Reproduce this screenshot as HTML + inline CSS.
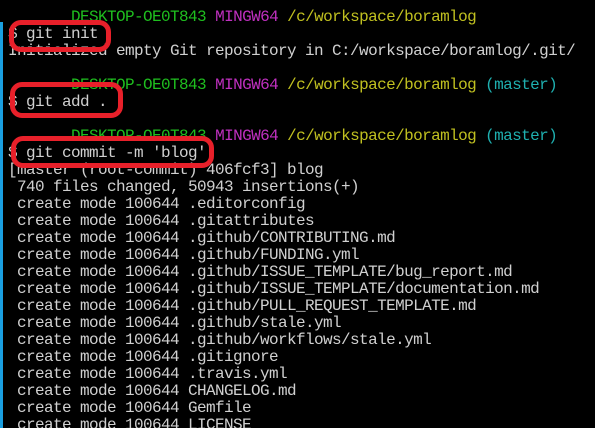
<!DOCTYPE html>
<html><head><meta charset="utf-8"><style>
html,body{margin:0;padding:0;background:#000;width:595px;height:428px;overflow:hidden;position:relative}
.t{position:absolute;left:8px;top:9px;font-family:"Liberation Mono",monospace;font-size:16px;letter-spacing:-0.6px;line-height:17px;color:#d0d0d0;white-space:pre}
.g{color:#1fbf1f}.m{color:#c030c0}.y{color:#c0c020}.c{color:#1fb0b0}
.b{position:absolute;border:5px solid #e8202a;border-radius:12px;box-sizing:border-box}
.strip{position:absolute;left:0;top:22px;width:3px;height:406px;background:#1a9fe0}
</style></head><body>
<div class="strip"></div>
<div class="t">       <span class="g">DESKTOP-OE0T843</span> <span class="m">MINGW64</span> <span class="y">/c/workspace/boramlog</span>
$ git init
Initialized empty Git repository in C:/workspace/boramlog/.git/

       <span class="g">DESKTOP-OE0T843</span> <span class="m">MINGW64</span> <span class="y">/c/workspace/boramlog</span> <span class="c">(master)</span>
$ git add .

       <span class="g">DESKTOP-OE0T843</span> <span class="m">MINGW64</span> <span class="y">/c/workspace/boramlog</span> <span class="c">(master)</span>
$ git commit -m 'blog'
[master (root-commit) 406fcf3] blog
 740 files changed, 50943 insertions(+)
 create mode 100644 .editorconfig
 create mode 100644 .gitattributes
 create mode 100644 .github/CONTRIBUTING.md
 create mode 100644 .github/FUNDING.yml
 create mode 100644 .github/ISSUE_TEMPLATE/bug_report.md
 create mode 100644 .github/ISSUE_TEMPLATE/documentation.md
 create mode 100644 .github/PULL_REQUEST_TEMPLATE.md
 create mode 100644 .github/stale.yml
 create mode 100644 .github/workflows/stale.yml
 create mode 100644 .gitignore
 create mode 100644 .travis.yml
 create mode 100644 CHANGELOG.md
 create mode 100644 Gemfile
 create mode 100644 LICENSE</div>
<div class="b" style="left:9px;top:20px;width:102px;height:32px"></div>
<div class="b" style="left:10px;top:82px;width:113px;height:36px"></div>
<div class="b" style="left:11px;top:136px;width:203px;height:32px"></div>
</body></html>
